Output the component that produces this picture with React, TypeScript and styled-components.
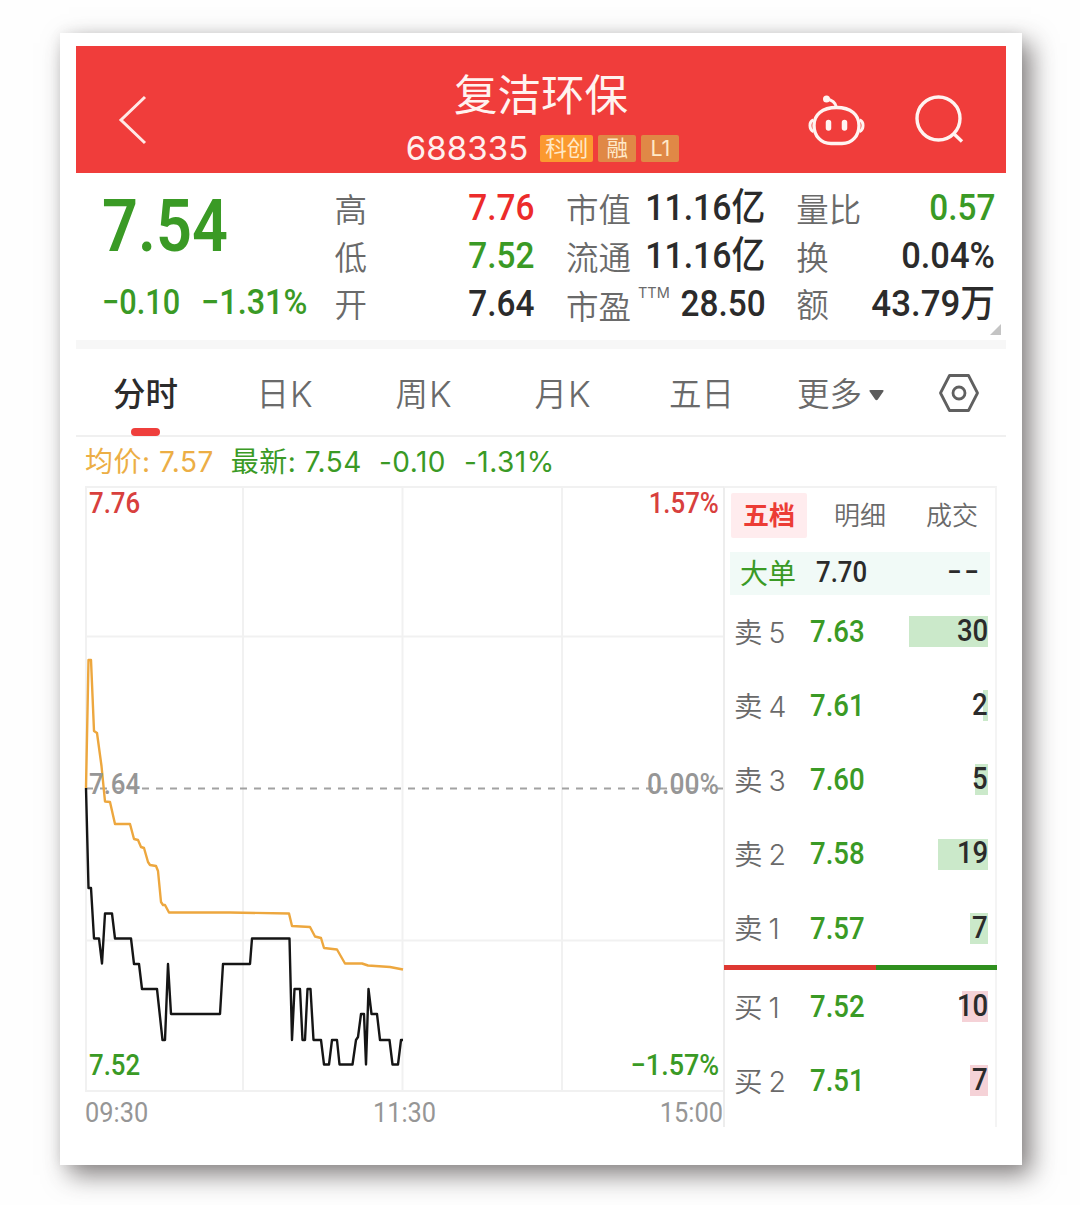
import React from "react";
import styled, { createGlobalStyle } from "styled-components";

const GREEN = "#3a9a25";
const RED = "#ec2b2b";
const DARK = "#2b2b2b";
const GREY = "#6a6a6a";
const cjk = `Inter, "Noto Sans CJK SC", sans-serif`;
const din = `Roboto, "Noto Sans CJK SC", sans-serif`;

const Global = createGlobalStyle`
  body { margin: 0; background: #fefefe; }
  * { box-sizing: border-box; }
`;

const Page = styled.div`
  width: 1080px;
  height: 1205px;
  padding: 33px 58px 40px 60px;
  overflow: hidden;
`;

const Card = styled.main`
  width: 962px;
  height: 1132px;
  padding: 13px 16px;
  background: #fff;
  box-shadow: 9px 10px 24px rgba(45, 38, 38, 0.58), 0 0 12px rgba(0, 0, 0, 0.06);
`;

const Header = styled.header`
  height: 127px;
  display: grid;
  grid-template-columns: 230px 1fr 230px;
  background: #f03d3b;
  color: #fff;
`;

const BackSlot = styled.div`
  padding: 49px 0 0 42px;
`;

const Actions = styled.div`
  display: flex;
  gap: 49px;
  padding: 48px 0 0 31px;
`;

const Heading = styled.div`
  display: flex;
  flex-direction: column;
  align-items: center;
`;

const Title = styled.h1`
  margin: 20px 0 0;
  font: 400 43.5px/58px ${cjk};
  color: #fff3f0;
`;

const CodeRow = styled.div`
  display: flex;
  align-items: center;
  gap: 5px;
  height: 48px;
  margin-left: 3px;
`;

const Code = styled.span`
  font: 400 33px/40px ${cjk};
  letter-spacing: 0.1px;
  color: #fff0ee;
  margin-right: 7px;
`;

const Tag = styled.span<{ $w: number; $bg: string }>`
  width: ${(p) => p.$w}px;
  height: 27px;
  border-radius: 2px;
  background: ${(p) => p.$bg};
  font: 400 21.5px/26px ${cjk};
  text-align: center;
  color: #ffe9c8;
`;

const Quote = styled.section`
  height: 167px;
  display: grid;
  grid-template-columns: 201.3px 200px 199px 199px;
  column-gap: 31.3px;
  padding: 11px 0 0 26px;
  position: relative;
`;

const Num = styled.span<{
  $size: number;
  $color?: string;
  $weight?: number;
  $from?: string;
  $sx?: number;
  $track?: number;
}>`
  display: inline-block;
  font-family: ${din};
  font-size: ${(p) => p.$size}px;
  font-weight: ${(p) => p.$weight ?? 500};
  line-height: 1.2;
  letter-spacing: ${(p) => p.$track ?? 0}px;
  color: ${(p) => p.$color ?? DARK};
  white-space: pre;
  transform: scaleX(${(p) => p.$sx ?? 0.89});
  transform-origin: ${(p) => p.$from ?? "right"} center;
`;

const Last = styled.div`
  height: 89px;
  line-height: 91px;
`;

const Changes = styled.div`
  display: flex;
  gap: 11px;
  height: 59px;
  align-items: center;
`;

const Stats = styled.div`
  display: grid;
  grid-template-rows: repeat(3, 47.7px);
`;

const Stat = styled.div`
  display: flex;
  align-items: center;
  justify-content: space-between;
  white-space: nowrap;
`;

const Label = styled.span`
  font: 350 32.5px/40px ${cjk};
  color: ${GREY};
  padding-top: 6px;
`;

const Sup = styled.sup`
  font: 400 14.5px/15px ${cjk};
  margin-left: 7px;
  vertical-align: 21px;
`;

const Corner = styled.i`
  position: absolute;
  right: 5px;
  bottom: 5px;
  border-style: solid;
  border-width: 0 0 11px 11px;
  border-color: transparent transparent #c4c4c4 transparent;
`;

const Divider = styled.div`
  height: 9px;
  background: #f7f7f7;
`;

const Tabs = styled.nav`
  height: 88px;
  display: grid;
  grid-template-columns: repeat(6, 139px) 1fr;
  border-bottom: 2px solid #f0f0f0;
`;

const Tab = styled.div<{ $active?: boolean }>`
  display: flex;
  align-items: center;
  justify-content: center;
  gap: 7px;
  position: relative;
  font: ${(p) => (p.$active ? 500 : 350)} 32.5px/40px ${cjk};
  color: ${(p) => (p.$active ? DARK : GREY)};
  padding-top: 6px;
  &::after {
    content: "";
    display: ${(p) => (p.$active ? "block" : "none")};
    position: absolute;
    left: 55px;
    bottom: -1px;
    width: 29px;
    height: 8px;
    border-radius: 4px;
    background: #ef3f3c;
  }
`;

const Latin = styled.span`
  font-size: 35px;
  margin: -2px 0 0 -6px;
`;

const Gear = styled.svg`
  margin: -4px 0 0 2px;
`;

const Legend = styled.div`
  height: 49px;
  display: flex;
  align-items: center;
  padding: 1px 0 0 9px;
  font: 400 28px/40px ${cjk};
  letter-spacing: 0.5px;
  white-space: pre;
`;

const LegendItem = styled.span<{ $c: string; $gap: number }>`
  color: ${(p) => p.$c};
  margin-right: ${(p) => p.$gap}px;
`;

const Body = styled.section`
  display: grid;
  grid-template-columns: 638px 274px;
  grid-template-rows: 641px;
  padding-left: 9px;
  height: 641px;
`;

const ChartArea = styled.div`
  position: relative;
`;

const ChartSvg = styled.svg`
  display: block;
  overflow: visible;
`;

const Mark = styled.div<{ $top: number; $right?: boolean }>`
  position: absolute;
  top: ${(p) => p.$top}px;
  ${(p) => (p.$right ? "right: 4px;" : "left: 4px;")}
  line-height: 0;
`;

const Axis = styled.div`
  display: grid;
  grid-template-columns: 1fr 1fr 1fr;
  padding-top: 4px;
`;

const Tick = styled.span<{ $align: string }>`
  text-align: ${(p) => p.$align};
`;

const Book = styled.div`
  border-left: 2px solid #ededed;
  border-right: 2px solid #f4f4f4;
  border-top: 2px solid #f2f2f2;
`;

const BookTabs = styled.div`
  height: 64px;
  display: grid;
  grid-template-columns: 76px 106px 78px;
  padding: 5px 0 14px 6px;
`;

const BookTab = styled.span<{ $active?: boolean }>`
  display: flex;
  align-items: center;
  justify-content: center;
  font: ${(p) => (p.$active ? 700 : 350)} 26px/36px ${cjk};
  color: ${(p) => (p.$active ? "#ec3c35" : GREY)};
  background: ${(p) => (p.$active ? "#ffecee" : "none")};
  border-radius: 2px;
`;

const BigOrder = styled.div`
  margin: 0 5px;
  height: 43px;
  display: grid;
  grid-template-columns: 76px 1fr auto;
  align-items: center;
  padding: 0 8px 2px 10px;
  background: #f1faf7;
`;

const BigLabel = styled.span`
  font: 400 28px/36px ${cjk};
  color: ${GREEN};
  padding-top: 2px;
`;

const Rows = styled.div<{ $pad: string }>`
  display: flex;
  flex-direction: column;
  gap: 43.2px;
  padding: ${(p) => p.$pad};
`;

const Row = styled.div`
  height: 31px;
  display: grid;
  grid-template-columns: 76px 80px 1fr;
  grid-template-rows: 31px;
  align-items: center;
  padding: 0 7px 0 9px;
`;

const PriceCell = styled.span`
  line-height: 0;
`;

const Side = styled.span`
  display: flex;
  gap: 6px;
  font: 350 28.5px/36px ${cjk};
  color: ${GREY};
  padding-top: 2px;
`;

const Volume = styled.span<{ $bg: string; $w: number }>`
  justify-self: end;
  display: flex;
  justify-content: flex-end;
  align-items: center;
  width: 90px;
  height: 31px;
  padding-bottom: 2px;
  background: linear-gradient(${(p) => p.$bg}, ${(p) => p.$bg}) right / ${(p) => p.$w}px 31px no-repeat;
`;

const Ratio = styled.div`
  height: 5px;
  margin: 0 -2px 0 -1px;
  display: grid;
  grid-template-columns: 152px 1fr;
`;

const RatioPart = styled.i<{ $bg: string }>`
  background: ${(p) => p.$bg};
`;

const average =
  "1,302 3.5,174 6,174 9,245 12,247 16.5,280 20,315.5 25,316 30,338 45,338 49,353 53,354 56,361 59,362 63,376 65,379 71,380 73,385 76,416 78,419 80,419 84,426.5 145,426.5 204,427.5 207,440 225,441 230,450.5 236,452 239,462 252,463.5 260,477.5 277,477.5 283,479.5 305,481 318,483.5";

const price =
  "1,302 3.5,402 6,402 9,452.5 14,452.5 17,477.5 20,427.5 27,427.5 30,452.5 46,452.5 49,478 54,478 57,503 72,503 77.5,554 80,554 83,478 86,528 135,528 138,478 165,478 167,452.5 204.5,452.5 207,554 209.5,503 215,503 217.5,554 220,554 222.5,503 225.5,503 228.5,554 236,554 239,578.5 244,578.5 247,554 252,554 254.5,578.5 267.5,578.5 271,554 273,551 276,528 279,528 281,578.5 283.5,503 286.5,528 292,528 295,554 304.5,554 307.5,578.5 313,578.5 316,554 318,554";

const sells = [
  { n: "5", p: "7.63", v: "30", w: 79 },
  { n: "4", p: "7.61", v: "2", w: 5 },
  { n: "3", p: "7.60", v: "5", w: 13 },
  { n: "2", p: "7.58", v: "19", w: 50 },
  { n: "1", p: "7.57", v: "7", w: 18 },
];
const buys = [
  { n: "1", p: "7.52", v: "10", w: 26 },
  { n: "2", p: "7.51", v: "7", w: 18 },
];

type Level = { n: string; p: string; v: string; w: number };

function LevelRow({ side, level, bg }: { side: string; level: Level; bg: string }) {
  return (
    <Row>
      <Side>
        <span>{side}</span>
        <span>{level.n}</span>
      </Side>
      <PriceCell>
        <Num $size={31} $color={GREEN} $from="left">{level.p}</Num>
      </PriceCell>
      <Volume $bg={bg} $w={level.w}>
        <Num $size={31}>{level.v}</Num>
      </Volume>
    </Row>
  );
}

type StatProps = { label: string; value: string; color?: string; sup?: string; sx?: number };

function StatLine({ label, value, color, sup, sx }: StatProps) {
  return (
    <Stat>
      <Label>
        {label}
        {sup && <Sup>{sup}</Sup>}
      </Label>
      <Num $size={37.5} $color={color} $sx={sx}>{value}</Num>
    </Stat>
  );
}

export default function App() {
  return (
    <Page>
      <Global />
      <Card>
        <Header>
          <BackSlot>
            <svg width="30" height="50" viewBox="0 0 30 50" fill="none" stroke="#ffe9e6" strokeWidth="3">
              <path d="M27 2L3 25L27 48" />
            </svg>
          </BackSlot>
          <Heading>
            <Title>复洁环保</Title>
            <CodeRow>
              <Code>688335</Code>
              <Tag $w={53} $bg="#fb992f">科创</Tag>
              <Tag $w={38} $bg="#e08846">融</Tag>
              <Tag $w={38} $bg="#e08846">L1</Tag>
            </CodeRow>
          </Heading>
          <Actions>
            <svg width="58" height="54" viewBox="0 0 58 54" fill="none" stroke="#fff4f1" strokeWidth="3.4">
              <path d="M29.500 13.500C44 13.500 52 21 52 31.500C52 42 45 49.500 35 49.500H24C14 49.500 7 42 7 31.500C7 21 15 13.500 29.500 13.500Z" />
              <path d="M6.500 26Q3 27 3 31.500T6.500 37.500M52.500 26Q56 27 56 31.500T52.500 37.500" strokeWidth="3" />
              <path d="M29.500 13.500Q28 6 19 5" strokeWidth="3" />
              <circle cx="19.500" cy="5" r="3.500" fill="#fff4f1" stroke="none" />
              <path d="M21.500 28.500V34M37.500 28.500V34" strokeWidth="5.500" strokeLinecap="round" />
            </svg>
            <svg width="54" height="54" viewBox="0 0 54 54" fill="none" stroke="#fff4f1" strokeWidth="3.4">
              <circle cx="24.500" cy="24.500" r="21.500" />
              <path d="M39 39L48 47.500" />
            </svg>
          </Actions>
        </Header>

        <Quote>
          <div>
            <Last>
              <Num $size={72} $color={GREEN} $weight={600} $from="left" $sx={0.875}>7.54</Num>
            </Last>
            <Changes>
              <Num $size={34.5} $color={GREEN} $from="left">−0.10</Num>
              <Num $size={34.5} $color={GREEN} $from="left" $sx={0.94}>−1.31%</Num>
            </Changes>
          </div>
          <Stats>
            <StatLine label="高" value="7.76" color={RED} />
            <StatLine label="低" value="7.52" color={GREEN} />
            <StatLine label="开" value="7.64" />
          </Stats>
          <Stats>
            <StatLine label="市值" value="11.16亿" sx={0.9} />
            <StatLine label="流通" value="11.16亿" sx={0.9} />
            <StatLine label="市盈" sup="TTM" value="28.50" />
          </Stats>
          <Stats>
            <StatLine label="量比" value="0.57" color={GREEN} />
            <StatLine label="换" value="0.04%" sx={0.92} />
            <StatLine label="额" value="43.79万" sx={0.93} />
          </Stats>
          <Corner />
        </Quote>

        <Divider />

        <Tabs>
          <Tab $active>分时</Tab>
          <Tab>日<Latin>K</Latin></Tab>
          <Tab>周<Latin>K</Latin></Tab>
          <Tab>月<Latin>K</Latin></Tab>
          <Tab>五日</Tab>
          <Tab>
            更多
            <svg width="15" height="11" viewBox="0 0 15 11" fill="#5c5c5c">
              <path d="M1.500 0H13.500Q15.500 0 14 2L8.800 9.500Q7.500 11 6.200 9.500L1 2Q-.5 0 1.500 0Z" />
            </svg>
          </Tab>
          <Tab>
            <Gear width="42" height="40" viewBox="0 0 42 40" fill="none" stroke="#606060" strokeWidth="2.800" strokeLinejoin="round">
              <path d="M11.500 2.500H30.500L39.500 20L30.500 37.500H11.500L2.500 20Z" />
              <circle cx="21" cy="20" r="6" />
            </Gear>
          </Tab>
        </Tabs>

        <Legend>
          <LegendItem $c="#ecae45" $gap={17}>均价: 7.57</LegendItem>
          <LegendItem $c={GREEN} $gap={17}>最新: 7.54</LegendItem>
          <LegendItem $c={GREEN} $gap={18}>-0.10</LegendItem>
          <LegendItem $c={GREEN} $gap={0}>-1.31%</LegendItem>
        </Legend>

        <Body>
          <ChartArea>
            <ChartSvg width="638" height="606" viewBox="0 0 638 606" fill="none">
              <g stroke="#f1f1f1" strokeWidth="2">
                <path d="M0 1H638M0 150.500H638M0 454.500H638M0 605H638" />
                <path d="M1 0V605M158 0V605M317.500 0V605M477 0V605" />
              </g>
              <path d="M1 302.500H638" stroke="#a2a2a2" strokeWidth="1.800" strokeDasharray="7 7" />
              <polyline points={average} stroke="#eda73e" strokeWidth="2.400" strokeLinejoin="round" />
              <polyline points={price} stroke="#151515" strokeWidth="2.400" strokeLinejoin="round" />
            </ChartSvg>
            <Mark $top={0}><Num $size={29} $color="#d8403d" $from="left">7.76</Num></Mark>
            <Mark $top={281}><Num $size={29} $color="#969696" $from="left">7.64</Num></Mark>
            <Mark $top={562}><Num $size={29} $color={GREEN} $from="left">7.52</Num></Mark>
            <Mark $top={0} $right><Num $size={29} $color="#d8403d">1.57%</Num></Mark>
            <Mark $top={281} $right><Num $size={29} $color="#969696" $sx={0.91}>0.00%</Num></Mark>
            <Mark $top={562} $right><Num $size={29} $color={GREEN} $sx={0.93}>−1.57%</Num></Mark>
            <Axis>
              <Tick $align="left"><Num $size={28.5} $weight={450} $color="#969696" $from="left">09:30</Num></Tick>
              <Tick $align="center"><Num $size={28.5} $weight={450} $color="#969696" $from="center">11:30</Num></Tick>
              <Tick $align="right"><Num $size={28.5} $weight={450} $color="#969696">15:00</Num></Tick>
            </Axis>
          </ChartArea>
          <Book>
            <BookTabs>
              <BookTab $active>五档</BookTab>
              <BookTab>明细</BookTab>
              <BookTab>成交</BookTab>
            </BookTabs>
            <BigOrder>
              <BigLabel>大单</BigLabel>
              <Num $size={29} $from="left">7.70</Num>
              <Num $size={29} $track={3}>−−</Num>
            </BigOrder>
            <Rows $pad="21px 0">
              {sells.map((l) => (
                <LevelRow key={l.n} side="卖" level={l} bg="#cbe9ca" />
              ))}
            </Rows>
            <Ratio>
              <RatioPart $bg="#de3832" />
              <RatioPart $bg="#2f8f1e" />
            </Ratio>
            <Rows $pad="21.5px 0 0">
              {buys.map((l) => (
                <LevelRow key={l.n} side="买" level={l} bg="#f5d2d7" />
              ))}
            </Rows>
          </Book>
        </Body>
      </Card>
    </Page>
  );
}
